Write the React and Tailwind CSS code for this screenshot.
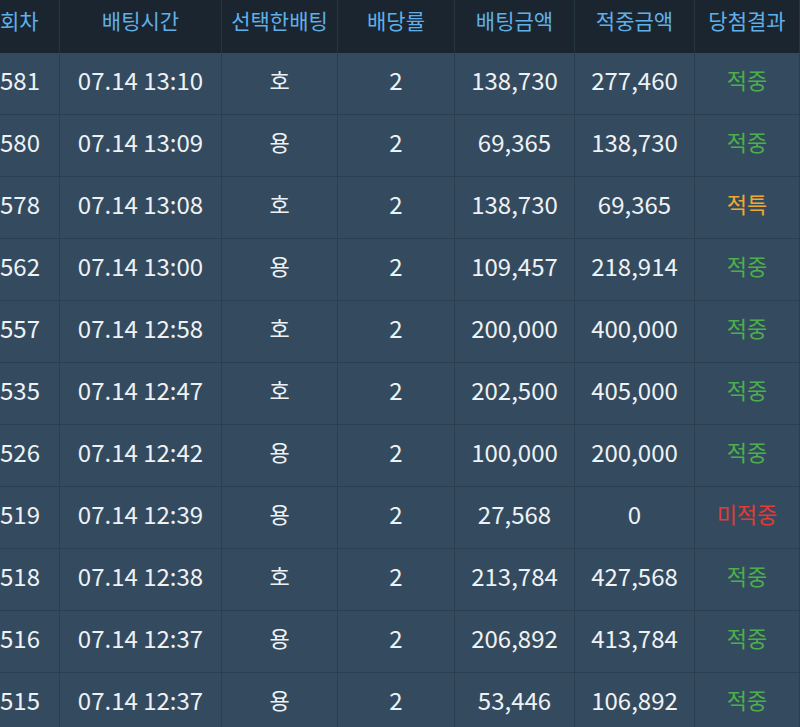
const rows = [
["581","07.14 13:10","호","2","138,730","277,460","적중"],
["580","07.14 13:09","용","2","69,365","138,730","적중"],
["578","07.14 13:08","호","2","138,730","69,365","적특"],
["562","07.14 13:00","용","2","109,457","218,914","적중"],
["557","07.14 12:58","호","2","200,000","400,000","적중"],
["535","07.14 12:47","호","2","202,500","405,000","적중"],
["526","07.14 12:42","용","2","100,000","200,000","적중"],
["519","07.14 12:39","용","2","27,568","0","미적중"],
["518","07.14 12:38","호","2","213,784","427,568","적중"],
["516","07.14 12:37","용","2","206,892","413,784","적중"],
["515","07.14 12:37","용","2","53,446","106,892","적중"],
];
const cols = "grid grid-cols-[60px_162px_116px_117px_120px_120px_105px]";
const head = ["회차","배팅시간","선택한배팅","배당률","배팅금액","적중금액","당첨결과"];
const color = r => r==="적중"?"text-[#4cae4c]":r==="적특"?"text-[#f0a830]":"text-[#e53935]";
export default function App(){
  return <div className="w-[800px] h-[727px] overflow-hidden bg-[#344b5f]" style={{fontFamily:'"Noto Sans CJK KR","Noto Sans",sans-serif'}}>
    <div className={`${cols} h-[53px] bg-[#1b2530] text-[#5fb0e8] text-[21px]`}>
      {head.map((h,i)=><div key={i} className={`flex items-center ${i===0?"justify-start":"justify-center"} border-r border-[#263542] pb-3`}>{h}</div>)}
    </div>
    {rows.map((r,ri)=><div key={ri} className={`${cols} h-[62px] border-b border-[#2b3f50] text-[24px] text-[#eef2f5]`}>
      {r.map((c,i)=><div key={i} className={`flex items-center ${i===0?"justify-start":"justify-center"} border-r border-[#2b3f50] pb-2 ${i===6?color(c)+" text-[22px]":""} ${i===2?"text-[22px]":""}`}>{c}</div>)}
    </div>)}
  </div>;
}
